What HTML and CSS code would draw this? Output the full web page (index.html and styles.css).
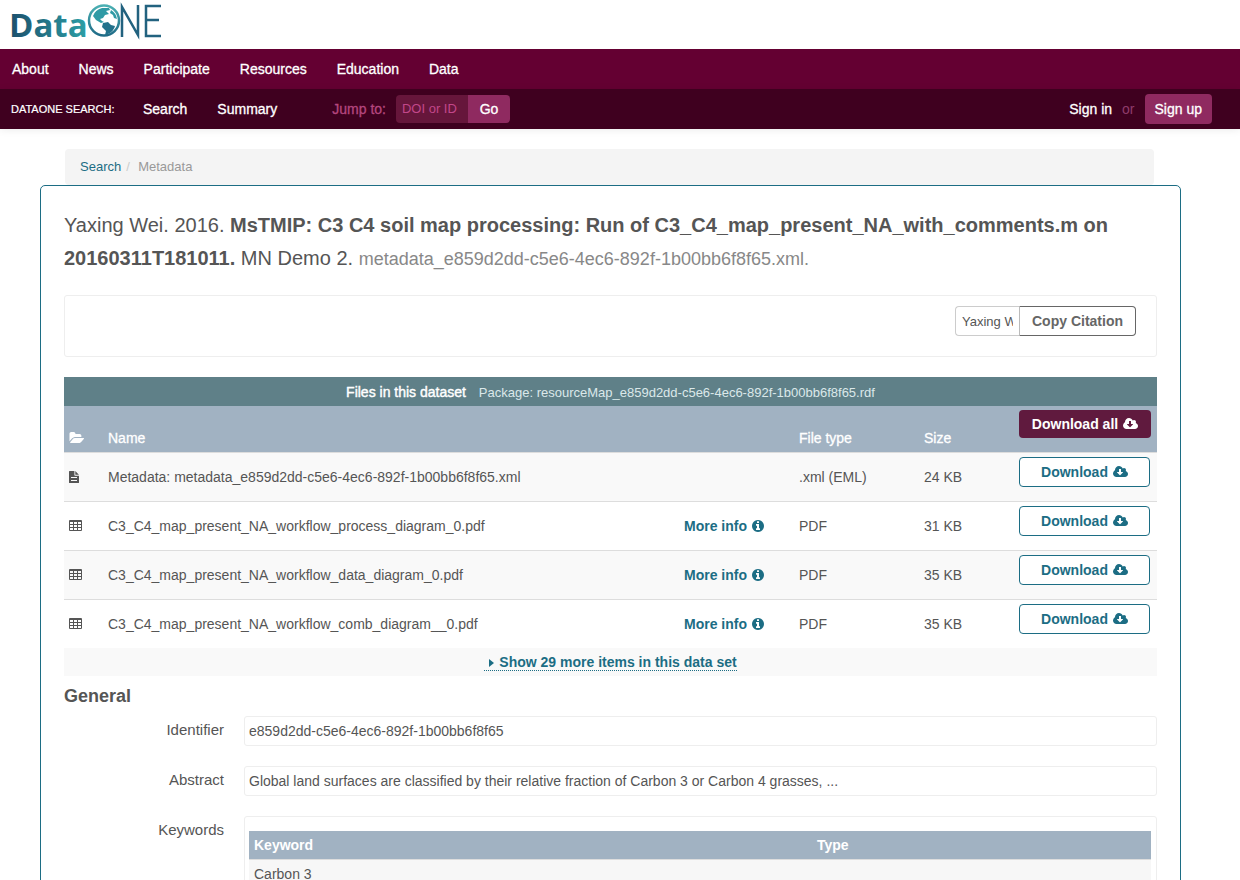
FILE: index.html
```html
<!DOCTYPE html>
<html lang="en">
<head>
<meta charset="utf-8">
<title>DataONE Metadata</title>
<link rel="stylesheet" href="styles.css">
</head>
<body>
<svg class="sprite" aria-hidden="true">
  <symbol id="cloud" viewBox="0 0 1920 1792"><path d="M1280 928q0-14-9-23t-23-9h-224v-352q0-13-9.5-22.5t-22.5-9.5h-192q-13 0-22.5 9.5t-9.5 22.5v352h-224q-13 0-22.5 9.5t-9.5 22.5q0 14 9 23l352 352q9 9 23 9t23-9l351-351q10-12 10-24zm640 224q0 159-112.5 271.5t-271.5 112.5h-1088q-185 0-316.5-131.5t-131.5-316.5q0-130 70-240t188-165q-2-30-2-43 0-212 150-362t362-150q156 0 285.5 87t188.5 231q71-62 166-62 106 0 181 75t75 181q0 76-41 138 130 31 213.5 135.5t83.5 238.5z"/></symbol>
  <symbol id="info" viewBox="0 0 1792 1792"><path d="M1152 1376v-160q0-14-9-23t-23-9h-96v-512q0-14-9-23t-23-9h-320q-14 0-23 9t-9 23v160q0 14 9 23t23 9h96v320h-96q-14 0-23 9t-9 23v160q0 14 9 23t23 9h448q14 0 23-9t9-23zm-128-896v-160q0-14-9-23t-23-9h-192q-14 0-23 9t-9 23v160q0 14 9 23t23 9h192q14 0 23-9t9-23zm640 416q0 209-103 385.5t-279.5 279.5-385.5 103-385.5-103-279.5-279.5-103-385.5 103-385.5 279.5-279.5 385.5-103 385.5 103 279.5 279.5 103 385.5z"/></symbol>
  <symbol id="folder" viewBox="0 0 1943 1792"><path d="M1943 952q0 31-31 66l-336 396q-43 51-120.5 86.500t-143.500 35.500h-1088q-34 0-60.500-13t-26.500-43q0-31 31-66l336-396q43-51 120.500-86.500t143.500-35.500h1088q34 0 60.500 13t26.500 43zm-343-344v160h-832q-94 0-197 47.500t-164 119.500l-337 396-5 6q0-4-.5-12.500t-.5-12.500v-960q0-92 66-158t158-66h320q92 0 158 66t66 158v32h544q92 0 158 66t66 158z"/></symbol>
  <symbol id="file" viewBox="0 0 10 12"><path fill-rule="evenodd" d="M0 .6Q0 0 .6 0H5.400V4.100Q5.400 4.700 6 4.700H10V11.400Q10 12 9.400 12H.6Q0 12 0 11.400ZM6.300 0.100L9.900 3.800H6.300ZM2 6V7H8V6ZM2 9V10H8V9Z"/></symbol>
  <symbol id="grid" viewBox="0 0 13 11"><path fill-rule="evenodd" d="M1 0H12Q13 0 13 1V10Q13 11 12 11H1Q0 11 0 10V1Q0 0 1 0ZM1 2V4H4V2ZM5 2V4H8V2ZM9 2V4H12V2ZM1 5V7H4V5ZM5 5V7H8V5ZM9 5V7H12V5ZM1 8V10H4V8ZM5 8V10H8V8ZM9 8V10H12V8Z"/></symbol>
</svg>

<header>
  <a class="logo" href="#" aria-label="DataONE home">
    <svg width="156" height="48" viewBox="-4 0 156 48">
      <defs>
        <linearGradient id="word" x1="0" x2="1"><stop offset="0" stop-color="#1c4f6c"/><stop offset="1" stop-color="#2c9fa6"/></linearGradient>
        <linearGradient id="sea" x1="0" y1="0" x2="0" y2="1"><stop offset="0" stop-color="#4bb0b3"/><stop offset="1" stop-color="#1f6b87"/></linearGradient>
      </defs>
      <text class="logo-word" x="-3" y="36" fill="url(#word)">Data</text>
      <circle cx="92" cy="19.500" r="15" fill="#fff" stroke="url(#sea)" stroke-width="2.500"/>
      <path fill="#2f9aa5" d="M81 15Q83 9 90 7L97 7L98 9L94 10L97 13L93 14L91 17L88 18L90 20L92 21L89 22L84 19ZM99 9Q104 12 105 18L102 17L101 14L98 12Z"/>
      <path fill="#22728c" d="M91 22L96 21L99 24L103 25Q102 30 96 33L93 34L94 30L90 26Z"/>
      <path fill="none" stroke="#22627f" stroke-width="2.500" d="M110 36V6L126 34V4M149 5H134V35H149M134 19H147"/>
    </svg>
  </a>
  <nav class="bar main-bar" aria-label="Main">
    <a href="#">About</a><a href="#">News</a><a href="#">Participate</a><a href="#">Resources</a><a href="#">Education</a><a href="#">Data</a>
  </nav>
  <nav class="bar search-bar" aria-label="DataONE search">
    <span class="bar-label">DATAONE SEARCH:</span>
    <a href="#">Search</a><a href="#">Summary</a>
    <form class="jump">
      <label for="jump">Jump to:</label>
      <input id="jump" type="text" placeholder="DOI or ID"><button type="button">Go</button>
    </form>
    <div class="account"><a href="#">Sign in</a><span>or</span><a class="signup" href="#">Sign up</a></div>
  </nav>
</header>

<main>
  <nav class="crumbs" aria-label="Breadcrumb"><a href="#">Search</a><span class="slash">/</span><span>Metadata</span></nav>
  <article class="panel">
    <h1 class="citation">Yaxing Wei. 2016. <strong>MsTMIP: C3 C4 soil map processing: Run of C3_C4_map_present_NA_with_comments.m on 20160311T181011.</strong> MN Demo 2. <span class="doc-id">metadata_e859d2dd-c5e6-4ec6-892f-1b00bb6f8f65.xml.</span></h1>

    <div class="copy-box">
      <input type="text" aria-label="Citation text" value="Yaxing Wei. 2016. MsTMIP"><button type="button">Copy Citation</button>
    </div>

    <table class="files">
      <caption><strong>Files in this dataset</strong> <span>Package: resourceMap_e859d2dd-c5e6-4ec6-892f-1b00bb6f8f65.rdf</span></caption>
      <colgroup><col class="c-icon"><col><col class="c-info"><col class="c-type"><col class="c-size"><col class="c-get"></colgroup>
      <thead>
        <tr><th><svg class="i-folder"><use href="#folder"/></svg></th><th>Name</th><th></th><th>File type</th><th>Size</th><th class="get"><button type="button" class="btn all">Download all <svg class="i-cloud"><use href="#cloud"/></svg></button></th></tr>
      </thead>
      <tbody>
        <tr><td><svg class="i-file"><use href="#file"/></svg></td><td>Metadata: metadata_e859d2dd-c5e6-4ec6-892f-1b00bb6f8f65.xml</td><td></td><td>.xml (EML)</td><td>24 KB</td><td class="get"><button type="button" class="btn">Download <svg class="i-cloud"><use href="#cloud"/></svg></button></td></tr>
        <tr><td><svg class="i-grid"><use href="#grid"/></svg></td><td>C3_C4_map_present_NA_workflow_process_diagram_0.pdf</td><td><a class="more" href="#">More info <svg class="i-info"><use href="#info"/></svg></a></td><td>PDF</td><td>31 KB</td><td class="get"><button type="button" class="btn">Download <svg class="i-cloud"><use href="#cloud"/></svg></button></td></tr>
        <tr><td><svg class="i-grid"><use href="#grid"/></svg></td><td>C3_C4_map_present_NA_workflow_data_diagram_0.pdf</td><td><a class="more" href="#">More info <svg class="i-info"><use href="#info"/></svg></a></td><td>PDF</td><td>35 KB</td><td class="get"><button type="button" class="btn">Download <svg class="i-cloud"><use href="#cloud"/></svg></button></td></tr>
        <tr><td><svg class="i-grid"><use href="#grid"/></svg></td><td>C3_C4_map_present_NA_workflow_comb_diagram__0.pdf</td><td><a class="more" href="#">More info <svg class="i-info"><use href="#info"/></svg></a></td><td>PDF</td><td>35 KB</td><td class="get"><button type="button" class="btn">Download <svg class="i-cloud"><use href="#cloud"/></svg></button></td></tr>
      </tbody>
    </table>
    <div class="show-more"><a href="#"><svg class="i-caret" viewBox="0 0 5 8"><path d="M0 0L5 4L0 8Z"/></svg>Show 29 more items in this data set</a></div>

    <section>
      <h2>General</h2>
      <dl class="fields">
        <dt>Identifier</dt><dd>e859d2dd-c5e6-4ec6-892f-1b00bb6f8f65</dd>
        <dt>Abstract</dt><dd>Global land surfaces are classified by their relative fraction of Carbon 3 or Carbon 4 grasses, ...</dd>
        <dt>Keywords</dt>
        <dd class="keywords">
          <table><thead><tr><th>Keyword</th><th>Type</th></tr></thead>
          <tbody><tr><td>Carbon 3</td><td></td></tr></tbody></table>
        </dd>
      </dl>
    </section>
  </article>
</main>
</body>
</html>
```
FILE: styles.css
```css
* { box-sizing: border-box; }
html { height: 100%; overflow: hidden; }
body {
  height: 100%;
  margin: 0;
  overflow: hidden;
  background: #fff;
  color: #555;
  font: 14px/20px "Helvetica Neue", "Liberation Sans", Arial, sans-serif;
}
a { color: #1c6d84; text-decoration: none; }
button, input { font: inherit; }
svg { fill: currentColor; }
.sprite { display: none; }

.logo { display: block; height: 49px; padding: 1px 8px 0; }
.logo svg { display: block; }
.logo-word { font: bold 33px "Open Sans", sans-serif; }

.bar { display: flex; align-items: center; height: 40px; padding: 0 12px; }
.bar a { color: #fff; -webkit-text-stroke: 0.3px #fff; }
.main-bar { gap: 30px; background: #640032; }
.search-bar { background: #3f001f; gap: 30px; padding-left: 11px; box-shadow: 0 1px 8px rgba(0, 0, 0, 0.08); }
.bar-label { width: 102px; color: #fff; font-size: 11px; white-space: nowrap; -webkit-text-stroke: 0.2px #fff; }
.jump { display: flex; align-items: center; margin-left: 25px; color: #b5467e; }
.jump label { margin-right: 10px; -webkit-text-stroke: 0.3px #b5467e; }
.jump input {
  width: 72px; height: 28px; padding: 0 6px 2px;
  border: 0; border-radius: 4px 0 0 4px;
  background: #66163b; color: #fff;
}
.jump input::placeholder { color: #c2478a; opacity: 1; font-size: 13px; }
.jump button {
  width: 42px; height: 28px; padding: 0;
  border: 0; border-radius: 0 4px 4px 0;
  background: #8f2a60; color: #fff;
  -webkit-text-stroke: 0.3px #fff;
}
.account { display: flex; align-items: center; gap: 10px; margin-left: auto; margin-right: 16px; color: #8f3b6b; }
.account .signup { padding: 5px 10px; border-radius: 4px; background: #8f2a60; }

main { padding: 20px 59px 0 40px; }
.crumbs {
  display: flex; gap: 5px;
  margin: 0 27px 0 25px; padding: 8px 15px;
  border-radius: 4px;
  background: #f4f4f4; color: #999;
  font-size: 13px;
}
.slash { width: 7px; color: #ccc; }
.panel { min-height: 800px; padding: 23px 23px 0; border: 1px solid #1c6d84; border-radius: 5px; }
.citation { margin: 0; font-size: 20px; font-weight: 400; line-height: 33px; }
.doc-id { color: #888; font-size: 18px; line-height: 20px; }

.copy-box {
  display: flex; justify-content: flex-end;
  height: 62px; margin: 20px 0; padding: 10px 20px;
  border: 1px solid #eee; border-radius: 3px;
}
.copy-box input {
  width: 64px; height: 30px; padding: 4px 6px;
  border: 1px solid #ccc; border-right: 0; border-radius: 4px 0 0 4px;
  color: #555; font-size: 13px;
}
.copy-box button {
  width: 117px; height: 30px; padding: 0;
  border: 1px solid #666; border-left-color: #bbb; border-radius: 0 4px 4px 0;
  background: #fff; color: #666; font-weight: 700;
}

.files { width: 100%; table-layout: fixed; border-collapse: collapse; }
.files caption { padding: 5px 0 4px; background: #5f8088; color: #fff; text-align: center; }
.files caption strong { margin-right: 9px; font-weight: 400; -webkit-text-stroke: 0.4px #fff; }
.files caption span { color: #dbe8ea; font-size: 13px; line-height: 16px; }
.c-icon { width: 39px; }
.c-info { width: 115px; }
.c-type { width: 125px; }
.c-size { width: 95px; }
.c-get { width: 143px; }
.files th, .files td { padding: 4px 5px; text-align: left; font-weight: 400; }
.files th { height: 46px; background: #a1b2c2; color: #fff; vertical-align: bottom; -webkit-text-stroke: 0.3px #fff; }
.files td { height: 49px; border-top: 1px solid #ddd; }
.files tbody tr:nth-child(odd) { background: #f9f9f9; }
.files .get { vertical-align: top; }
.btn {
  display: inline-flex; align-items: center; justify-content: center; gap: 5px;
  width: 131px; height: 30px; padding: 0;
  border: 1px solid #1c6d84; border-radius: 4px;
  background: #fff; color: #1c6d84; font-weight: 700;
}
.btn.all { width: 132px; height: 28px; border: 0; background: #601a3e; color: #fff; -webkit-text-stroke: 0; }
.more { font-weight: 700; }
.i-cloud { width: 15px; height: 14px; }
.i-info { width: 14px; height: 14px; vertical-align: -2px; }
.i-folder { display: block; width: 15px; height: 14px; margin-bottom: 3px; }
.i-file { display: block; width: 10px; height: 12px; }
.i-grid { display: block; width: 13px; height: 11px; }
.i-caret { width: 5px; height: 8px; margin: 0 5px; }

.show-more { padding: 4px 0; background: #f9f9f9; font-weight: 700; text-align: center; }
.show-more a { border-bottom: 1px dotted #1c6d84; }

h2 { margin: 10px 0; font-size: 18px; line-height: 20px; }
.fields { display: grid; grid-template-columns: 160px 1fr; gap: 20px; margin: 0; }
.fields dt { padding-top: 4px; font-size: 15px; text-align: right; }
.fields dd { margin: 0; padding: 4px; border: 1px solid #eee; border-radius: 3px; }
.fields .keywords { padding-top: 14px; padding-right: 5px; min-height: 80px; }
.keywords table { width: 100%; table-layout: fixed; border-collapse: collapse; }
.keywords th, .keywords td { padding: 4px 5px; text-align: left; }
.keywords th { background: #a1b2c2; color: #fff; }
.keywords th:first-child { width: 563px; }
.keywords td { border-top: 1px solid #ddd; background: #f7f7f7; }
```
